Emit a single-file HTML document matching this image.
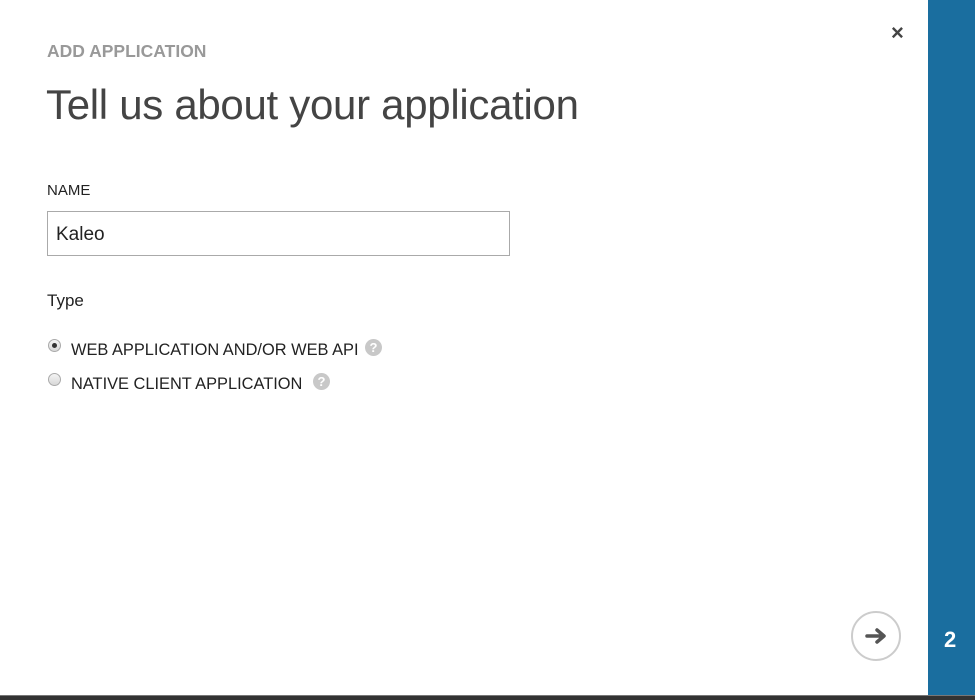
<!DOCTYPE html>
<html><head><meta charset="utf-8"><style>
html,body{margin:0;padding:0;width:975px;height:700px;overflow:hidden;background:#fff;font-family:"Liberation Sans",sans-serif;}
.abs{position:absolute}
.q{display:inline-block;width:17px;height:17px;border-radius:50%;background:#c8c8c8;color:#fff;font-weight:bold;font-size:13px;line-height:17px;text-align:center}
.radio{width:13px;height:13px;border-radius:50%;border:1px solid #aaa;background:linear-gradient(#f4f4f4,#d8d8d8);box-sizing:border-box}
.lbl{font-size:16.4px;color:#222;}
</style></head><body>
<div class="abs" style="left:928px;top:0;width:47px;height:696px;background:#1a6e9f"></div>
<div class="abs" style="left:0;top:696px;width:975px;height:4px;background:#333"></div>
<div class="abs" style="left:0;top:695px;width:975px;height:1px;background:#777"></div>
<div class="abs" style="left:891px;top:20px;font-size:22px;font-weight:bold;color:#444">×</div>
<div class="abs" style="left:47px;top:41px;font-size:17.5px;color:#999;font-weight:bold;">ADD APPLICATION</div>
<div class="abs" style="left:46px;top:81px;font-size:42px;color:#444;font-weight:300;letter-spacing:-0.3px">Tell us about your application</div>
<div class="abs" style="left:47px;top:182px;font-size:15px;color:#222;">NAME</div>
<div class="abs" style="left:47px;top:211px;width:463px;height:45px;border:1px solid #aaa;box-sizing:border-box;"></div>
<div class="abs" style="left:56px;top:224px;font-size:19px;color:#222">Kaleo</div>
<div class="abs" style="left:47px;top:291px;font-size:17px;color:#222">Type</div>
<div class="abs radio" style="left:48px;top:339px"><div style="position:absolute;left:3px;top:3px;width:5px;height:5px;border-radius:50%;background:#333"></div></div>
<div class="abs lbl" style="left:71px;top:341px">WEB APPLICATION AND/OR WEB API</div>
<div class="abs q" style="left:365px;top:339px">?</div>
<div class="abs radio" style="left:48px;top:373px"></div>
<div class="abs lbl" style="left:71px;top:375px">NATIVE CLIENT APPLICATION</div>
<div class="abs q" style="left:313px;top:373px">?</div>
<svg class="abs" style="left:849px;top:610px" width="54" height="54">
<circle cx="27" cy="26" r="24" fill="none" stroke="#ccc" stroke-width="2"/>
<path d="M18 26H34M28 20L35 26L28 32" fill="none" stroke="#555" stroke-width="3.5" stroke-linecap="round" stroke-linejoin="round"/>
</svg>
<div class="abs" style="left:944px;top:627px;font-size:22px;font-weight:bold;color:#fff">2</div>
</body></html>
